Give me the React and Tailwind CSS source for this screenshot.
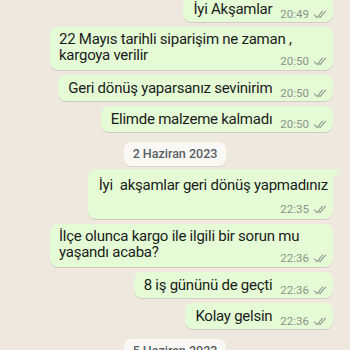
import React from 'react'

const font = { fontFamily: 'Roboto, "Noto Sans", sans-serif' }

function Ticks() {
  return (
    <svg width="15" height="9" viewBox="0 0 16 10" fill="none" className="ml-[4px]">
      <path d="M1.2 5.4 L4.2 8.4 L10.2 1.2" stroke="#8e9a8d" strokeWidth="1.2" strokeLinecap="round" strokeLinejoin="round" />
      <path d="M6.6 7.6 L7.4 8.4 L13.6 1.2" stroke="#8e9a8d" strokeWidth="1.2" strokeLinecap="round" strokeLinejoin="round" />
    </svg>
  )
}

function Time({ t, className = '' }) {
  return (
    <span className={`flex items-center text-[11.5px] leading-[14px] text-[#8a958a] whitespace-nowrap ${className}`}>
      {t}
      <Ticks />
    </span>
  )
}

// single line: text and time on one row
function Inline({ text, time }) {
  return (
    <div className="flex items-end rounded-[8px] bg-[#e5fbd6] pl-[10px] pr-[5px] pt-[4px] pb-[4px] shadow-[0_1px_0.5px_rgba(0,0,0,0.12)]">
      <span className="text-[15px] leading-[18px] tracking-[-0.25px] text-[#1a1c1a] whitespace-nowrap">{text}</span>
      <Time t={time} className="ml-[8px] translate-y-[3px]" />
    </div>
  )
}

// wrapped: time sits at the bottom right under the text
function Wrapped({ lines, time }) {
  return (
    <div className="flex w-[283px] flex-col rounded-[8px] bg-[#e5fbd6] pl-[9px] pr-[5px] pt-[4px] pb-[2px] shadow-[0_1px_0.5px_rgba(0,0,0,0.12)]">
      <span className="text-[15px] leading-[16px] tracking-[-0.25px] text-[#1a1c1a]">
        {lines.map((l, i) => (
          <span key={i} className="block whitespace-nowrap">{l}</span>
        ))}
      </span>
      <Time t={time} className="-mt-[9px] self-end" />
    </div>
  )
}

function DatePill({ children }) {
  return (
    <div className="self-center rounded-[7px] bg-[#faf8f4] px-[9px] py-[4px] text-[12.5px] font-medium leading-[16px] text-[#596066] shadow-[0_1px_0.5px_rgba(0,0,0,0.08)]">
      {children}
    </div>
  )
}

export default function App() {
  return (
    <div className="h-[350px] w-[350px] overflow-hidden bg-[#eee8df]" style={font}>
      <div className="-mt-[4px] flex flex-col items-end gap-[5px] pr-[17px]">
        <Inline text="İyi Akşamlar" time="20:49" />
        <Wrapped lines={['22 Mayıs tarihli siparişim ne zaman ,', 'kargoya verilir']} time="20:50" />
        <Inline text="Geri dönüş yaparsanız sevinirim" time="20:50" />
        <Inline text="Elimde malzeme kalmadı" time="20:50" />

        <div className="mt-[5px] flex w-full justify-center pl-[17px]">
          <DatePill>2 Haziran 2023</DatePill>
        </div>

        <div className="relative -mt-[2px] flex flex-col rounded-[8px] rounded-tr-none bg-[#e5fbd6] pl-[11px] pr-[5px] pt-[7px] pb-[3px] shadow-[0_1px_0.5px_rgba(0,0,0,0.12)]">
          <span className="text-[15px] leading-[18px] tracking-[-0.25px] text-[#1a1c1a] whitespace-pre">İyi  akşamlar geri dönüş yapmadınız</span>
          <Time t="22:35" className="mt-[8px] self-end" />
          {/* bubble tail */}
          <span className="absolute -right-[8px] top-0 h-[10px] w-[8px] bg-[#e5fbd6] [clip-path:polygon(0_0,100%_0,0_100%)]" />
        </div>

        <Wrapped lines={['İlçe olunca kargo ile ilgili bir sorun mu', 'yaşandı acaba?']} time="22:36" />
        <Inline text="8 iş gününü de geçti" time="22:36" />
        <Inline text="Kolay gelsin" time="22:36" />

        <div className="mt-[5px] flex w-full justify-center pl-[17px]">
          <DatePill>5 Haziran 2023</DatePill>
        </div>
      </div>
    </div>
  )
}
